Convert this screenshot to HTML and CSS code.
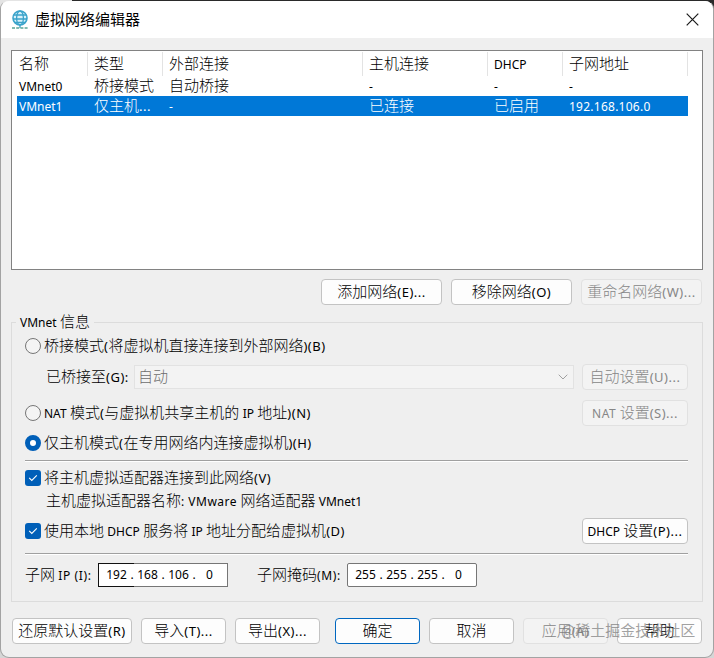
FILE: index.html
```html
<!DOCTYPE html>
<html lang="zh-CN">
<head>
<meta charset="utf-8">
<title>虚拟网络编辑器</title>
<link rel="stylesheet" href="styles.css">
</head>
<body>
<div class="window">
  <header class="titlebar">
    <svg class="app-icon" width="18" height="20" viewBox="0 0 18 20" fill="none">
      <circle cx="9" cy="8" r="7" fill="#d8f1fa" stroke="#3aa3ca" stroke-width="1.6"/>
      <ellipse cx="9" cy="8" rx="3.4" ry="7" stroke="#3aa3ca" stroke-width="1.3"/>
      <path d="M2.8 5h12.4M2 9h14M4 12.5h10" stroke="#3aa3ca" stroke-width="1.3"/>
      <path d="M9 15v3" stroke="#3aa3ca" stroke-width="1.3"/>
      <path d="M1 18h16" stroke="#5aa597" stroke-width="1.6" stroke-dasharray="3 1.2"/>
    </svg>
    <h1>虚拟网络编辑器</h1>
    <svg class="close" width="13" height="13" viewBox="0 0 13 13"><path d="M.7.7l11.6 11.6M12.3.7L.7 12.3" stroke="#1a1a1a" stroke-width="1.2" fill="none"/></svg>
  </header>

  <div class="list">
    <div class="row head"><span>名称</span><span>类型</span><span>外部连接</span><span>主机连接</span><span><i>DHCP</i></span><span>子网地址</span></div>
    <div class="row"><span><i>VMnet0</i></span><span>桥接模式</span><span>自动桥接</span><span><i>-</i></span><span><i>-</i></span><span><i>-</i></span></div>
    <div class="row selected"><span><i>VMnet1</i></span><span>仅主机<i class="key">...</i></span><span><i>-</i></span><span>已连接</span><span>已启用</span><span><i class="addr">192.168.106.0</i></span></div>
  </div>

  <div class="list-actions">
    <button>添加网络<i class="key">(E)...</i></button>
    <button>移除网络<i class="key">(O)</i></button>
    <button disabled>重命名网络<i class="key">(W)...</i></button>
  </div>

  <section class="group">
    <h2><i>VMnet</i> 信息</h2>
    <div class="line bridge"><span class="radio"></span><span class="text">桥接模式<i class="key">(</i>将虚拟机直接连接到外部网络<i class="key">)(B)</i></span></div>
    <div class="line adapter">
      <span class="text label">已桥接至<i class="key">(G):</i></span>
      <div class="combo"><span class="text">自动</span><svg width="10" height="6" viewBox="0 0 10 6"><path d="M.7.7L5 5 9.3.7" fill="none" stroke="#a0a0a0"/></svg></div>
      <button disabled>自动设置<i class="key">(U)...</i></button>
    </div>
    <div class="line nat"><span class="radio"></span><span class="text"><i>NAT</i> 模式<i class="key">(</i>与虚拟机共享主机的 <i>IP</i> 地址<i class="key">)(N)</i></span><button disabled><i class="wide">NAT</i> 设置<i class="key">(S)...</i></button></div>
    <div class="line host"><span class="radio on"></span><span class="text">仅主机模式<i class="key">(</i>在专用网络内连接虚拟机<i class="key">)(H)</i></span></div>
    <hr>
    <div class="line connect"><span class="check"><svg width="10" height="8" viewBox="0 0 10 8"><path d="M1.2 3.8L3.8 6.4 8.8 1.4" fill="none" stroke="#fff" stroke-width="1.1"/></svg></span><span class="text">将主机虚拟适配器连接到此网络<i class="key">(V)</i></span></div>
    <div class="line name"><span class="text">主机虚拟适配器名称<i class="vendor">: VMware</i> 网络适配器 <i>VMnet1</i></span></div>
    <div class="line dhcp"><span class="check"><svg width="10" height="8" viewBox="0 0 10 8"><path d="M1.2 3.8L3.8 6.4 8.8 1.4" fill="none" stroke="#fff" stroke-width="1.1"/></svg></span><span class="text">使用本地 <i>DHCP</i> 服务将 <i>IP</i> 地址分配给虚拟机<i class="key">(D)</i></span><button><i>DHCP</i> 设置<i class="key">(P)...</i></button></div>
    <hr>
    <div class="line subnet">
      <span class="text ip-label">子网 <i class="wide">IP (I):</i></span>
      <div class="ip focus"><b>192</b>.<b>168</b>.<b>106</b>.<b>0</b></div>
      <span class="text mask-label">子网掩码<i class="wide">(M):</i></span>
      <div class="ip"><b>255</b>.<b>255</b>.<b>255</b>.<b>0</b></div>
    </div>
  </section>

  <footer>
    <button class="reset">还原默认设置<i class="key">(R)</i></button>
    <button>导入<i class="key">(T)...</i></button>
    <button>导出<i class="key">(X)...</i></button>
    <button class="primary">确定</button>
    <button>取消</button>
    <button disabled>应用<i class="key">(A)</i></button>
    <button>帮助</button>
    <span class="watermark">@稀土掘金技术社区</span>
  </footer>
</div>
</body>
</html>
```
FILE: styles.css
```css
* { box-sizing: border-box; }
body {
  margin: 0;
  width: 714px;
  height: 658px;
  overflow: hidden;
  background: linear-gradient(90deg, #e4e4e4 72px, #2a2a2a 72px) top / 100% 40px no-repeat #d6d6d6;
  font: 300 15px/20px "Noto Sans CJK SC", sans-serif;
  color: #000;
}
i { font: 400 12px/12px "Noto Sans", sans-serif; }
.key { font-size: 13px; letter-spacing: .5px; }
.wide { letter-spacing: .6px; }
.window {
  height: 658px;
  border: 1px solid #a3a3a3;
  border-top-color: transparent;
  border-radius: 9px;
  background: #efefef;
  background-clip: padding-box;
  overflow: hidden;
}
.titlebar {
  height: 37px;
  padding: 0 14px 0 10px;
  display: flex;
  align-items: center;
  background: #fff;
}
.titlebar h1 { flex: 1; margin: 0 0 0 6px; padding-bottom: 2px; font-size: 15px; font-weight: 400; }
.list {
  margin: 12px 10px 0;
  height: 220px;
  padding: 1px 14px 0 5px;
  border: 1px solid #828282;
  background: #fff;
}
.row {
  display: grid;
  grid-template-columns: 71px 75px 200px 125px 75px 125px;
  height: 20px;
}
.row span { padding-left: 6px; white-space: nowrap; line-height: 17px; }
.row span:first-child { padding-left: 2px; }
.head { height: 24px; }
.row.head span { border-right: 1px solid #e3e3e3; line-height: 21px; }
.selected { background: #0078d7; color: #fff; }
.addr { letter-spacing: .25px; }
button {
  height: 26px;
  padding: 0 0 2px;
  border: 1px solid #c3c3c3;
  border-radius: 4px;
  background: #fdfdfd;
  font: inherit;
  line-height: 22px;
  color: #000;
  white-space: nowrap;
}
button:disabled { color: #868686; background: #f3f3f3; border-color: #e1e1e1; }
.list-actions {
  display: flex;
  justify-content: flex-end;
  gap: 9px;
  padding: 9px 11px 0 0;
}
.list-actions button { width: 121px; }
.group {
  margin: 17px 10px 0;
  height: 280px;
  padding: 0 14px 0 13px;
  border: 1px solid #dcdcdc;
}
.group h2 {
  width: max-content;
  height: 20px;
  margin: -12px 0 0 -9px;
  padding: 0 4px;
  background: #efefef;
  font: inherit;
}
.line { display: flex; align-items: center; height: 26px; white-space: nowrap; }
.line button { width: 106px; margin-left: auto; }
.text { padding-bottom: 2px; }
.bridge { margin-top: 2px; }
.adapter { margin-top: 5px; padding-left: 21px; }
.label { width: 88px; }
.combo {
  display: flex;
  align-items: center;
  justify-content: space-between;
  width: 440px;
  height: 24px;
  padding: 0 5px 0 3px;
  border: 1px solid #e2e2e2;
  background: #f3f3f3;
  color: #6d6d6d;
}
.nat { margin-top: 10px; }
.host { margin-top: 4px; }
.radio, .check { flex: none; width: 16px; height: 16px; margin-right: 3px; }
.radio { border: 1px solid #767676; border-radius: 50%; background: #f4f4f4; }
.radio.on { border: 5px solid #005fb8; background: #fff; }
.check {
  display: flex;
  align-items: center;
  justify-content: center;
  border-radius: 3px;
  background: #005fb8;
}
hr { height: 2px; margin: 4px 0 0; border: 0; border-top: 1px solid #a0a0a0; background: #fff; }
.connect { margin-top: 3px; }
.name { height: 20px; padding-left: 21px; }
.vendor { letter-spacing: .5px; }
.dhcp { margin-top: 7px; }
.dhcp + hr { margin-top: 9px; }
.subnet { margin-top: 8px; height: 24px; }
.ip-label { width: 73px; }
.mask-label { width: 119px; padding-left: 29px; }
.ip {
  display: grid;
  grid-template-columns: 21px 10px 21px 10px 21px 10px 21px;
  width: 130px;
  height: 24px;
  padding-left: 7px;
  border: 1px solid #767676;
  border-radius: 2px;
  background: #fff;
  font: 400 12px/22px "Noto Sans", sans-serif;
  text-align: center;
}
.ip b { font-weight: 400; }
.ip.focus {
  border-image: linear-gradient(90deg, #111 36px, #767676 36px) 1;
}
footer { position: relative; display: flex; gap: 9px; padding: 16px 11px 0; }
footer button { width: 85px; }
footer .reset { width: 120px; }
footer .primary { margin-left: 6px; border-color: #0067c0; }
.watermark {
  position: absolute;
  left: 560px;
  top: 18px;
  color: rgba(120, 120, 120, .7);
  font-weight: 400;
  font-size: 15px;
  white-space: nowrap;
}
```
